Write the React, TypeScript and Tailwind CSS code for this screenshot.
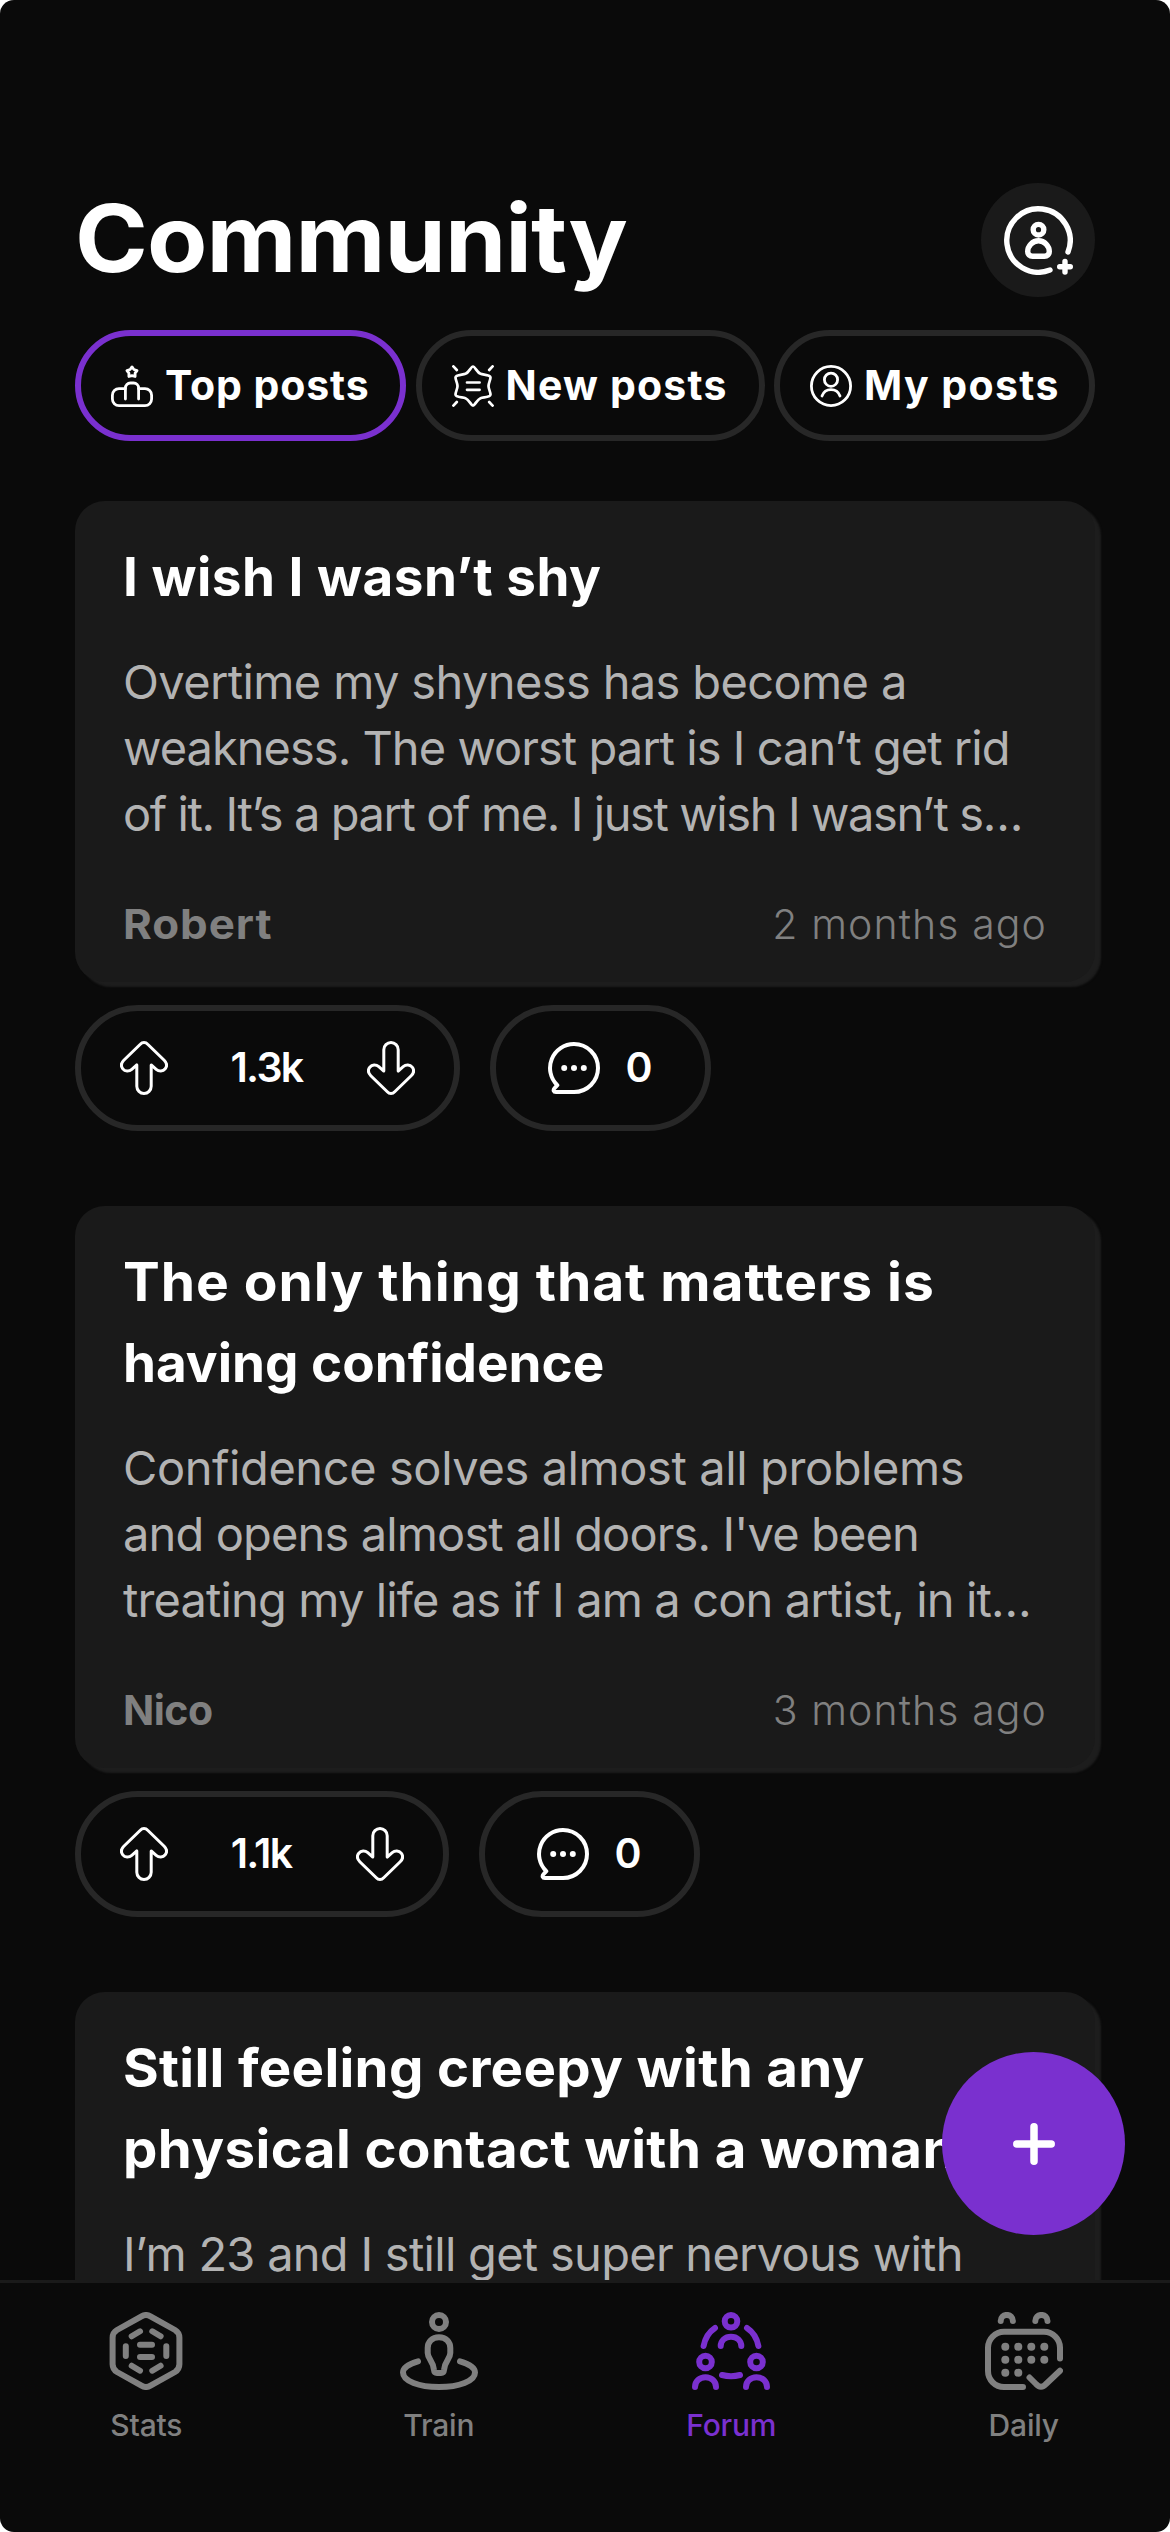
import type { ReactNode } from 'react';

type IconProps = { size: number; stroke: number; children: ReactNode };

const Icon = ({ size, stroke, children }: IconProps) => (
  <svg
    width={size}
    height={size}
    viewBox={`0 0 ${size} ${size}`}
    fill="none"
    stroke="currentColor"
    strokeWidth={stroke}
    strokeLinecap="round"
    strokeLinejoin="round"
    className="shrink-0"
  >
    {children}
  </svg>
);

const ProfileAddIcon = () => (
  <Icon size={69} stroke={5.4}>
    <path d="M46 64A31.7 31.7 0 1 1 64 46" />
    <circle cx="34.5" cy="23.7" r="5.3" />
    <path d="M34.5 34.7c-6 0-10.8 5.3-10.8 10.8 0 3 2.1 4.8 4.8 4.8h12c2.7 0 4.8-1.8 4.8-4.8 0-5.5-4.8-10.8-10.8-10.8z" />
    <path d="M61 55.4v10.6M55.7 60.7h10.6" />
  </Icon>
);

const PodiumIcon = () => (
  <Icon size={42} stroke={2.8}>
    <path d="M21 1.9l1.9 2.6L26 5.6l-1.9 2.6v3.3L21 10.7l-3.1.8V8.2L16 5.6l3.1-1.1z" />
    <path d="M14.4 23.6H8a6.6 6.6 0 0 0-6.6 6.6V34A6.6 6.6 0 0 0 8 40.6h26a6.6 6.6 0 0 0 6.6-6.6v-3.8a6.6 6.6 0 0 0-6.6-6.6h-6.4" />
    <path d="M14.4 34V23a5 5 0 0 1 5-5h3.2a5 5 0 0 1 5 5v11" />
  </Icon>
);

const BurstIcon = () => (
  <Icon size={42} stroke={2.7}>
    <path d="M21 1.5C19 1.5 17 7.5 13.5 8.8 10.5 9.9 3.5 9.5 3.5 12.5c0 2.5 2 5.5 2 8.5s-2 6-2 8.5c0 3 7 2.6 10 3.7 3.5 1.3 5.5 7.3 7.5 7.3s4-6 7.5-7.3c3-1.1 10-.7 10-3.7 0-2.5-2-5.5-2-8.5s2-6 2-8.5c0-3-7-2.6-10-3.7C25 7.5 23 1.5 21 1.5z" />
    <path d="M15 17.5h12.6M15 24.8h12.6" />
    <path d="M1.4 1.4L4.8 5M40.6 1.4L37.2 5M1.4 40.6L4.8 37M40.6 40.6L37.2 37" />
  </Icon>
);

const UserCircleIcon = () => (
  <Icon size={42} stroke={2.8}>
    <circle cx="21" cy="21" r="19.6" />
    <circle cx="21" cy="14.7" r="6.6" />
    <path d="M12 31c1.5-4 5-6.3 9-6.3s7.5 2.3 9 6.3" />
  </Icon>
);

const VoteArrow = ({ down = false }: { down?: boolean }) => (
  <svg
    width="48"
    height="54"
    viewBox="0 0 48 54"
    fill="none"
    stroke="currentColor"
    strokeWidth="3"
    strokeLinejoin="round"
    className={down ? 'shrink-0 rotate-180' : 'shrink-0'}
  >
    <path d="M24 1.5c-1.5 0-2.7.6-3.7 1.7L3.8 19.3C.8 22.3 1 25.5 2.8 27.8 5 30.5 9 30.7 11.8 28.3l5-4.4v21.4a7.2 7.2 0 0 0 14.4 0V23.9l5 4.4c2.8 2.4 6.8 2.2 9-.5 1.8-2.3 2-5.5-1-8.5L27.7 3.2C26.7 2.1 25.5 1.5 24 1.5z" />
  </svg>
);

const CommentIcon = () => (
  <Icon size={52} stroke={4}>
    <path d="M26 2a24 24 0 0 1 0 48H8c-2.5 0-3-2-1.5-3.7l2.8-3.1A24 24 0 0 1 26 2z" />
    <g fill="currentColor" stroke="none">
      <circle cx="16.2" cy="26" r="3" />
      <circle cx="26" cy="26" r="3" />
      <circle cx="35.8" cy="26" r="3" />
    </g>
  </Icon>
);

const StatsIcon = () => (
  <Icon size={78} stroke={6}>
    <path d="M34.5 4.3a9 9 0 0 1 9 0L68 18a9 9 0 0 1 4.4 7.7v26.6A9 9 0 0 1 68 60L43.5 73.7a9 9 0 0 1-9 0L10 60a9 9 0 0 1-4.4-7.7V25.7A9 9 0 0 1 10 18z" />
    <path d="M18.8 34.3V44M59.3 34.3V44M33 32.7h12M33 45h12" />
    <path d="M24.7 24.3l8.3-5M45.3 19.3l8.3 5M24.7 53.7l8.3 5M45.3 58.7l8.3-5" />
  </Icon>
);

const TrainIcon = () => (
  <Icon size={78} stroke={6}>
    <circle cx="39" cy="10" r="7" />
    <path d="M39 25.3c-7 0-11.3 4.7-11.3 10.7v5c0 6 5.8 8 6.3 17 .2 2 1 3 3 3h4c2 0 2.8-1 3-3 .5-9 6.3-11 6.3-17v-5c0-6-4.3-10.7-11.3-10.7z" />
    <path d="M18 49.3C9 51.8 3 56 3 60.5 3 69 19 75 39 75s36-6 36-14.5c0-4.5-6-8.7-15-11.2" />
  </Icon>
);

const ForumIcon = () => (
  <Icon size={78} stroke={6}>
    <circle cx="39" cy="9.3" r="6.3" />
    <path d="M28.7 34c0-5.3 4.3-9.3 10.3-9.3s10.3 4 10.3 9.3" />
    <circle cx="13.5" cy="50" r="6.3" />
    <path d="M3 75c0-5.7 4.5-9.7 10.5-9.7S24 69.3 24 75" />
    <circle cx="64.5" cy="50" r="6.3" />
    <path d="M54 75c0-5.7 4.5-9.7 10.5-9.7S75 69.3 75 75" />
    <path d="M11.6 34C13 26.5 17 20 23 16M66.4 34C65 26.5 61 20 55 16" />
    <path d="M30 63c6 1.6 12 1.6 18 0" />
  </Icon>
);

const DailyIcon = () => (
  <Icon size={78} stroke={6}>
    <path d="M15.7 9a6.1 6.1 0 0 1 12.2 0M50.3 9a6.1 6.1 0 0 1 12.2 0" />
    <path d="M75 46.5V36a16 16 0 0 0-16-16.2H19A16 16 0 0 0 3 36v23a16 16 0 0 0 16 16h19" />
    <path d="M44.5 65.5L51 72c3 3.5 7 3.5 10 0l14-13.3" />
    <g fill="currentColor" stroke="none">
      {[20.3, 33.3, 46.3, 59.3].map((x) => (
        <circle key={x} cx={x} cy="34.7" r="4" />
      ))}
      {[20.3, 33.3, 46.3, 59.3].map((x) => (
        <circle key={x} cx={x} cy="47.7" r="4" />
      ))}
      {[20.3, 33.3].map((x) => (
        <circle key={x} cx={x} cy="60.7" r="4" />
      ))}
    </g>
  </Icon>
);

type Line = { text: string; fit: string };

type Post = {
  title: Line[];
  body: Line[];
  author?: Line;
  date?: string;
  votes?: string;
  pillWidth?: string;
  comments?: number;
};

const posts: Post[] = [
  {
    title: [{ text: 'I wish I wasn’t shy', fit: 'tracking-[0.5px]' }],
    body: [
      { text: 'Overtime my shyness has become a', fit: 'tracking-[-0.63px]' },
      { text: 'weakness. The worst part is I can’t get rid', fit: 'tracking-[-0.97px]' },
      { text: 'of it. It’s a part of me. I just wish I wasn’t s…', fit: 'tracking-[-1.4px]' },
    ],
    author: { text: 'Robert', fit: 'scale-x-107 tracking-[0.9px]' },
    date: '2 months ago',
    votes: '1.3k',
    pillWidth: 'w-[385px]',
    comments: 0,
  },
  {
    title: [
      { text: 'The only thing that matters is', fit: 'scale-x-104 tracking-[0.9px]' },
      { text: 'having confidence', fit: 'tracking-normal' },
    ],
    body: [
      { text: 'Confidence solves almost all problems', fit: 'tracking-[-0.41px]' },
      { text: "and opens almost all doors. I've been", fit: 'tracking-[-0.86px]' },
      { text: 'treating my life as if I am a con artist, in it…', fit: 'tracking-[-0.87px]' },
    ],
    author: { text: 'Nico', fit: 'tracking-[-0.5px]' },
    date: '3 months ago',
    votes: '1.1k',
    pillWidth: 'w-[374px]',
    comments: 0,
  },
  {
    title: [
      { text: 'Still feeling creepy with any', fit: 'scale-x-103 tracking-[0.3px]' },
      { text: 'physical contact with a woman', fit: 'scale-x-103 tracking-[0.4px]' },
    ],
    body: [{ text: 'I’m 23 and I still get super nervous with', fit: 'tracking-[-0.72px]' }],
  },
];

const tabs = [
  { label: 'Top posts', icon: <PodiumIcon />, active: true, size: 'w-[331px] tracking-[0.9px]' },
  { label: 'New posts', icon: <BurstIcon />, active: false, size: 'w-[349px] tracking-[1.2px]' },
  { label: 'My posts', icon: <UserCircleIcon />, active: false, size: 'w-[321px] tracking-[1.4px]' },
];

const navItems = [
  { label: 'Stats', icon: <StatsIcon />, active: false },
  { label: 'Train', icon: <TrainIcon />, active: false },
  { label: 'Forum', icon: <ForumIcon />, active: true },
  { label: 'Daily', icon: <DailyIcon />, active: false },
];

const PostCard = ({ post }: { post: Post }) => (
  <article className="mb-[75px]">
    <div className="rounded-[30px] bg-[#1a1a1a] px-12 pt-9 pb-7 shadow-[6px_5px_2px_#1d1d1d]">
      <h2 className="text-[53px] leading-[81px] font-bold text-white">
        {post.title.map((line) => (
          <span key={line.text} className={`block origin-left whitespace-nowrap ${line.fit}`}>
            {line.text}
          </span>
        ))}
      </h2>
      <p className="mt-[31px] text-[47px] leading-[66px] text-[#b3b3b3]">
        {post.body.map((line) => (
          <span key={line.text} className={`block whitespace-nowrap ${line.fit}`}>
            {line.text}
          </span>
        ))}
      </p>
      {post.author && (
        <div className="mt-[47px] flex justify-between text-[41px] leading-[60px] text-[#808080]">
          <span className={`origin-left font-bold ${post.author.fit}`}>{post.author.text}</span>
          <span className="font-light tracking-[1.1px]">{post.date}</span>
        </div>
      )}
    </div>

    {post.votes && (
      <div className="mt-[23px] flex gap-[30px] text-[41px] font-semibold text-white">
        <div
          className={`flex h-[126px] items-center justify-between rounded-full border-[6px] border-[#272727] px-[39px] ${post.pillWidth}`}
        >
          <VoteArrow />
          <span className="pr-0.5 tracking-[-1.7px]">{post.votes}</span>
          <VoteArrow down />
        </div>
        <div className="flex h-[126px] w-[221px] items-center justify-center gap-[25px] rounded-full border-[6px] border-[#272727]">
          <CommentIcon />
          <span>{post.comments}</span>
        </div>
      </div>
    )}
  </article>
);

export default function App() {
  return (
    <div className="bg-white">
      <div className="relative flex h-[2532px] w-[1170px] flex-col overflow-hidden rounded-[14px] bg-[#0a0a0a] font-['Inter','Liberation_Sans',sans-serif]">
        <main className="min-h-0 flex-1 overflow-hidden px-[75px] pt-[183px]">
          <header className="flex h-[114px] items-center justify-between">
            <h1 className="origin-left scale-x-106 pb-[3px] text-[93px] leading-none font-bold tracking-[-0.9px] text-white">
              Community
            </h1>
            <button className="flex size-[114px] items-center justify-center rounded-full bg-[#1a1a1a] text-white">
              <ProfileAddIcon />
            </button>
          </header>

          {/* Filter tabs */}
          <div className="mt-[33px] flex justify-between">
            {tabs.map((tab) => (
              <button
                key={tab.label}
                className={`flex h-[111px] items-center gap-3 rounded-full border-[6px] pl-[30px] text-[41px] font-bold whitespace-nowrap text-white ${tab.size} ${
                  tab.active ? 'border-[#7a30cf]' : 'border-[#272727]'
                }`}
              >
                {tab.icon}
                <span>{tab.label}</span>
              </button>
            ))}
          </div>

          {/* Feed */}
          <section className="mt-[60px]">
            {posts.map((post) => (
              <PostCard key={post.title[0].text} post={post} />
            ))}
          </section>
        </main>

        <nav className="grid h-[252px] grid-cols-4 border-t-[3px] border-[#1a1a1a] pt-[29px]">
          {navItems.map((item) => (
            <div
              key={item.label}
              className={`flex flex-col items-center ${item.active ? 'text-[#7a30cf]' : 'text-[#808080]'}`}
            >
              {item.icon}
              <span className="mt-[15px] text-[30px] leading-10 font-medium tracking-[-0.2px]">{item.label}</span>
            </div>
          ))}
        </nav>

        {/* New post */}
        <button className="absolute top-[2052px] left-[942px] flex size-[183px] items-center justify-center rounded-full bg-[#7a30cf] text-white">
          <Icon size={42} stroke={7.5}>
            <path d="M21 3.8v34.4M3.8 21h34.4" />
          </Icon>
        </button>
      </div>
    </div>
  );
}
